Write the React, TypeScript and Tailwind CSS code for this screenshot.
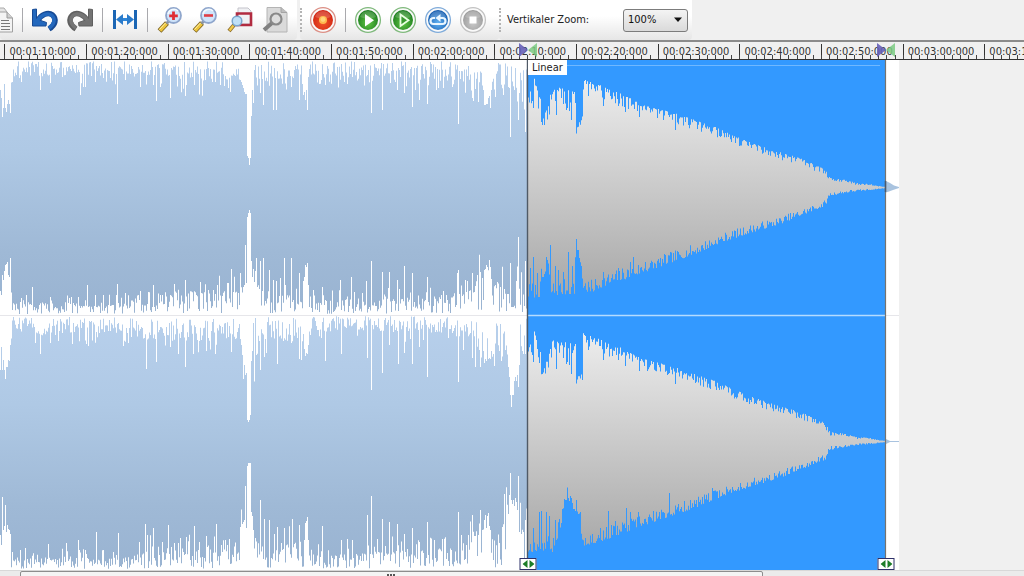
import type { ReactNode } from "react";

type Spike = [number, number];

const VIEW_WIDTH = 1024;
const CHANNEL_HEIGHT = 255;
const SECONDS_PER_VIEW = 125.4;
const FIRST_MARK_OFFSET = 0.55;
const SELECTION_START = 528;
const SELECTION_END = 886;
const CLIP_END = 899;

const percent = (x: number) => `${(x / VIEW_WIDTH) * 100}%`;

/* ---------- waveform data ---------- */

const topOne: Spike[] = [
  [0, 30], [1, 38], [2, 57], [3, 48], [4, 24], [5, 48], [6, 52], [7, 44], [8, 40], [9, 44], [10, 53], [12, 22], [19, 18], [25, 12],
  [40, 30], [50, 23], [62, 17], [80, 35], [85, 27], [95, 22], [103, 18], [117, 44], [125, 20], [140, 27], [156, 41], [160, 27],
  [170, 38], [185, 36], [194, 25], [205, 20], [212, 22], [215, 22], [220, 25], [228, 28], [230, 32], [235, 16], [240, 20],
  [241, 22], [242, 25], [243, 28], [244, 32], [245, 34], [246, 34], [247, 96], [248, 98], [249, 105], [250, 98], [251, 56],
  [252, 30], [253, 43], [260, 33], [263, 45], [273, 50], [276, 50], [291, 27], [299, 40], [302, 24], [303, 35], [304, 32],
  [305, 40], [306, 30], [307, 50], [321, 20], [325, 25], [347, 24], [371, 53], [382, 50], [397, 30], [404, 33], [412, 47],
  [419, 40], [427, 44], [436, 30], [443, 28], [458, 64], [472, 38], [478, 42], [483, 30], [484, 45], [485, 45], [486, 44],
  [487, 44], [488, 38], [489, 36], [490, 48], [491, 30], [495, 37], [503, 35], [508, 27], [510, 77], [514, 30], [518, 60], [525, 72],
];

const bottomOne: Spike[] = [
  [0, 24], [1, 20], [2, 40], [3, 35], [4, 44], [5, 50], [6, 51], [7, 53], [8, 40], [9, 38], [10, 57], [26, 20], [32, 28],
  [50, 18], [78, 18], [87, 30], [95, 20], [103, 20], [117, 31], [125, 22], [140, 24], [153, 30], [160, 20], [170, 20],
  [185, 35], [200, 33], [208, 25], [213, 25], [228, 32], [231, 46], [238, 22], [240, 42], [243, 28], [244, 30], [245, 70],
  [246, 32], [247, 98], [248, 102], [249, 105], [250, 102], [251, 54], [252, 38], [253, 46], [255, 44], [260, 54], [263, 57],
  [269, 45], [273, 35], [276, 34], [280, 37], [284, 57], [291, 57], [299, 42], [303, 34], [304, 38], [305, 50], [306, 48],
  [307, 52], [308, 30], [313, 25], [322, 28], [340, 35], [351, 38], [366, 34], [371, 54], [382, 43], [389, 43], [397, 35],
  [404, 49], [412, 42], [427, 38], [443, 24], [457, 42], [458, 45], [465, 35], [472, 42], [477, 40], [480, 43], [482, 37],
  [484, 45], [486, 50], [487, 48], [489, 55], [490, 48], [491, 36], [495, 30], [510, 52], [516, 34], [518, 78], [525, 54],
];

const topTwo: Spike[] = [
  [0, 55], [1, 32], [2, 55], [3, 45], [4, 55], [5, 64], [6, 52], [7, 52], [8, 45], [9, 46], [10, 30], [35, 28], [40, 39],
  [50, 28], [58, 26], [72, 29], [86, 29], [88, 31], [123, 31], [146, 54], [156, 47], [170, 32], [178, 39], [185, 52], [193, 39],
  [206, 36], [215, 39], [231, 37], [240, 24], [241, 30], [242, 40], [243, 64], [244, 50], [245, 60], [246, 58], [247, 105],
  [248, 107], [249, 105], [250, 100], [251, 46], [252, 36], [260, 55], [264, 42], [266, 38], [277, 49], [291, 28], [299, 44],
  [304, 34], [305, 41], [306, 38], [307, 39], [308, 30], [325, 46], [341, 39], [367, 43], [371, 75], [382, 58], [389, 30],
  [398, 49], [404, 38], [412, 49], [419, 32], [427, 62], [458, 67], [472, 43], [479, 35], [480, 52], [483, 36], [484, 48],
  [485, 44], [486, 46], [488, 44], [489, 43], [490, 44], [491, 36], [505, 35], [508, 52], [509, 62], [510, 80], [511, 92],
  [512, 80], [513, 80], [514, 66], [515, 62], [516, 66], [517, 60], [518, 72], [519, 50], [522, 36], [525, 39],
];

const bottomTwo: Spike[] = [
  [0, 35], [1, 25], [2, 73], [3, 40], [4, 44], [5, 65], [6, 38], [7, 45], [8, 41], [9, 40], [10, 36], [20, 20], [25, 22],
  [48, 26], [66, 27], [78, 30], [85, 20], [96, 38], [103, 20], [118, 37], [139, 28], [145, 46], [147, 35], [153, 42],
  [162, 28], [168, 45], [178, 27], [186, 33], [194, 44], [199, 28], [206, 34], [216, 46], [221, 25], [229, 31], [240, 43],
  [242, 46], [243, 48], [244, 50], [245, 84], [246, 42], [247, 104], [248, 107], [249, 107], [250, 107], [251, 58],
  [252, 54], [253, 40], [260, 70], [264, 51], [269, 50], [274, 36], [277, 43], [284, 42], [292, 51], [299, 45], [304, 30],
  [305, 47], [306, 49], [307, 53], [308, 30], [322, 44], [341, 30], [347, 31], [352, 30], [367, 55], [371, 74], [382, 51],
  [389, 48], [397, 46], [404, 36], [412, 42], [419, 28], [427, 48], [434, 30], [458, 58], [466, 25], [472, 55], [478, 35],
  [480, 60], [482, 40], [484, 50], [485, 55], [486, 42], [487, 54], [488, 57], [489, 44], [490, 40], [508, 56], [509, 75],
  [510, 97], [511, 70], [512, 66], [513, 70], [514, 64], [515, 72], [516, 68], [517, 60], [518, 94], [519, 38], [523, 38], [525, 50],
];

const fadeTop: Spike[] = [
  [528, 96], [530, 90], [532, 92], [534, 76], [536, 85], [538, 96], [540, 98], [541, 117], [543, 118], [545, 108], [548, 106],
  [550, 92], [553, 85], [557, 86], [564, 88], [569, 89], [575, 90], [576, 128], [578, 120], [580, 124], [582, 116], [583, 79],
  [590, 82], [600, 85], [610, 90], [625, 95], [640, 104], [660, 109], [680, 115], [700, 122], [715, 127], [735, 136],
  [750, 142], [775, 151], [790, 155], [805, 160], [815, 165], [825, 169], [828, 175], [830, 178], [840, 179], [850, 181],
  [856, 183], [870, 184], [878, 186], [886, 187],
];

const fadeBottomOne: Spike[] = [
  [528, 298], [540, 297], [541, 284], [548, 274], [550, 296], [574, 294], [575, 264], [580, 264], [583, 290], [590, 294],
  [600, 288], [640, 274], [700, 252], [720, 243], [750, 233], [780, 224], [800, 216], [825, 206], [829, 196], [850, 192],
  [870, 190], [886, 188],
];

const fadeBottomTwo: Spike[] = [
  [528, 299], [540, 296], [552, 298], [556, 288], [560, 274], [564, 254], [568, 245], [573, 255], [578, 262], [583, 292],
  [600, 288], [640, 273], [700, 252], [720, 243], [750, 233], [780, 224], [800, 216], [825, 206], [829, 196], [850, 192],
  [870, 190], [886, 188],
];

const fadeTopSpikes: Spike[] = [
  [533, 108], [556, 115], [563, 104], [566, 110], [567, 108], [569, 111], [571, 120], [588, 96], [603, 106], [618, 106],
  [625, 112], [639, 117], [675, 130], [719, 136], [735, 143], [751, 148],
];
const fadeBottomOneSpikes: Spike[] = [
  [530, 268], [533, 257], [537, 273], [546, 257], [547, 260], [550, 245], [555, 266], [558, 270], [563, 272], [568, 252], [572, 266], [576, 239],
  [577, 250], [579, 258], [603, 272], [618, 268], [630, 262], [633, 257], [645, 262], [735, 231],
];
const fadeBottomTwoSpikes: Spike[] = [
  [533, 274], [539, 258], [541, 257], [546, 258], [549, 262], [555, 266], [565, 246], [568, 244], [571, 244], [576, 246],
  [580, 258], [600, 274], [608, 257], [615, 267], [626, 254], [630, 258], [638, 258], [669, 239], [690, 246], [712, 234],
];

function noise(seed: number) {
  let state = seed;
  return () => {
    state = (state * 1664525 + 1013904223) >>> 0;
    return state / 4294967296;
  };
}

function interpolate(points: Spike[], x: number) {
  for (let i = 1; i < points.length; i++) {
    if (x <= points[i][0]) {
      const [x0, y0] = points[i - 1];
      const [x1, y1] = points[i];
      return y0 + ((y1 - y0) * (x - x0)) / (x1 - x0);
    }
  }
  return points[points.length - 1][1];
}

function loudEdge(spikes: Spike[], floor: Spike[], seed: number) {
  const random = noise(seed);
  const known = new Map(spikes);
  return Array.from({ length: SELECTION_START }, (_, x) => {
    const level = interpolate(floor, x);
    const value = level * (0.1 + random() * 1.3) + (random() > 0.82 ? level * 0.9 : 0);
    return known.get(x) ?? Math.max(0, value);
  });
}

function fadeEdge(points: Spike[], spikes: Spike[], direction: number, seed: number) {
  const random = noise(seed);
  const known = new Map(spikes);
  return Array.from({ length: SELECTION_END - SELECTION_START }, (_, i) => {
    const x = SELECTION_START + i;
    const base = interpolate(points, x);
    const roughness = x < 584 ? 16 : x < 828 ? 14 - ((x - 584) / 244) * 8 : 4 - ((x - 828) / 58) * 4;
    return known.get(x) ?? base + direction * roughness * Math.pow(random(), 1.7);
  });
}

function outline(startX: number, top: number[], bottom: number[]) {
  let path = `M${startX} ${top[0].toFixed(1)}`;
  top.forEach((y, i) => {
    path += `V${y.toFixed(1)}H${startX + i + 1}`;
  });
  for (let i = bottom.length - 1; i >= 0; i--) {
    path += `V${bottom[i].toFixed(1)}H${startX + i}`;
  }
  return path + "Z";
}

const topFloor: Spike[] = [[0, 30], [10, 30], [12, 11], [80, 12], [130, 10], [200, 16], [235, 14], [262, 14], [320, 12], [400, 13], [470, 15], [482, 30], [492, 26], [500, 20], [528, 22]];
const lowFloor: Spike[] = [[0, 25], [10, 30], [12, 8], [60, 9], [128, 9], [140, 17], [232, 18], [240, 22], [256, 26], [266, 14], [302, 16], [308, 18], [320, 11], [400, 12], [460, 16], [474, 22], [480, 40], [490, 38], [496, 24], [528, 22]];
const upperFloor: Spike[] = [[0, 30], [10, 30], [12, 7], [28, 8], [34, 14], [130, 13], [150, 20], [232, 18], [240, 22], [256, 30], [268, 16], [302, 22], [310, 14], [350, 10], [458, 14], [474, 20], [480, 38], [490, 38], [497, 24], [507, 36], [528, 26]];
const baseFloor: Spike[] = [[0, 30], [10, 30], [12, 9], [130, 11], [150, 17], [232, 15], [238, 28], [256, 28], [270, 12], [302, 24], [312, 11], [400, 15], [465, 16], [476, 38], [490, 32], [497, 16], [508, 50], [520, 30], [528, 30]];

const channels = [
  {
    loud: outline(0, loudEdge(topOne, topFloor, 11), loudEdge(bottomOne, lowFloor, 29).map((d) => CHANNEL_HEIGHT - d)),
    fade: outline(
      SELECTION_START,
      fadeEdge(fadeTop, fadeTopSpikes, 1, 5).map((y) => y - 60),
      fadeEdge(fadeBottomOne, fadeBottomOneSpikes, -1, 7).map((y) => y - 60),
    ),
  },
  {
    loud: outline(0, loudEdge(topTwo, upperFloor, 47), loudEdge(bottomTwo, baseFloor, 83).map((d) => CHANNEL_HEIGHT - d)),
    fade: outline(
      SELECTION_START,
      fadeEdge(fadeTop, fadeTopSpikes, 1, 53).map((y) => y - 61),
      fadeEdge(fadeBottomTwo, fadeBottomTwoSpikes, -1, 67).map((y) => y - 61),
    ),
  },
];

function Waveform() {
  return (
    <svg
      className="block h-full w-full"
      viewBox="0 0 1024 510"
      preserveAspectRatio="none"
      role="img"
      aria-label="Wellenform"
    >
      <defs>
        <linearGradient id="loud" x1="0" y1="0" x2="0" y2="255" gradientUnits="userSpaceOnUse">
          <stop offset="0" stopColor="#b8d0ec" />
          <stop offset="0.35" stopColor="#afc9e5" />
          <stop offset="0.75" stopColor="#9fb9d6" />
          <stop offset="1" stopColor="#99b3d1" />
        </linearGradient>
        <linearGradient id="fade" x1="0" y1="20" x2="0" y2="235" gradientUnits="userSpaceOnUse">
          <stop offset="0" stopColor="#ececec" />
          <stop offset="0.5" stopColor="#cacaca" />
          <stop offset="1" stopColor="#a8a8a8" />
        </linearGradient>
      </defs>
      <rect width={CLIP_END} height="510" fill="#ffffff" />
      <rect x={SELECTION_START} width={SELECTION_END - SELECTION_START} height="510" fill="#3399ff" />
      {channels.map((channel, index) => (
        <g key={index} transform={`translate(0 ${index * CHANNEL_HEIGHT})`}>
          <path d={channel.loud} fill="url(#loud)" />
          <path d={channel.fade} fill="url(#fade)" />
        </g>
      ))}
      <path d="M886 121l4 2l4 2.500l5 1.500v1l-6 2l-4 1.500l-3 1z" fill="#a9c3df" />
      <path d="M886 379l4 2h9v1h-9l-4 2z" fill="#a9c3df" />
      <path d="M0 255.500H528M886 255.500h13" stroke="#e6e6ea" />
      <path d="M528 255.500H886" stroke="#b5dcff" strokeWidth="1.500" />
      <path d="M567 5.500H880" stroke="#70b8ff" />
      <path d="M527.500 0V510" stroke="#505a66" strokeWidth="1.400" />
      <path d="M885.500 0V510" stroke="#75736f" strokeWidth="1.200" />
      <path d="M885.500 121v11" stroke="#4d5a6b" strokeWidth="1.500" />
    </svg>
  );
}

/* ---------- icons ---------- */

const Icon = ({ children }: { children: ReactNode }) => (
  <svg className="block h-7 w-7" viewBox="0 0 28 28" fill="none" aria-hidden="true">
    {children}
  </svg>
);

const CopyIcon = () => (
  <Icon>
    <path d="M9 2h9l3 4v19H9z" fill="#e4e4e4" stroke="#aaa" />
    <path d="M13 6h8l5.500 6v14H13z" fill="#f3f3f3" stroke="#a0a0a0" />
    <path d="M21 6v6h5.500" fill="#cfcfcf" stroke="#999" />
    <path d="M15 14.500h8M15 17.500h9M15 20.500h9M15 23.500h9" stroke="#777" />
  </Icon>
);

const UndoIcon = () => (
  <Icon>
    <path d="M6.500 15C10 8.500 17 5.500 21.500 9C26 13 24.500 19 18 23" stroke="#174a94" strokeWidth="5.400" />
    <path d="M1.500 3.500l4-.5v10l10 3.500l-.5 3.500H1.500z" fill="#2368bd" stroke="#174a94" />
    <path d="M6 15C10 9 16.500 6 21 9.500C24.500 13 23.500 18 18 22" stroke="#2468bd" strokeWidth="3.600" />
  </Icon>
);

const RedoIcon = () => (
  <Icon>
    <path d="M21.500 15C18 8.500 11 5.500 6.500 9C2 13 3.500 19 10 23" stroke="#606060" strokeWidth="5.400" />
    <path d="M26.500 3.500l-4-.5v10l-10 3.500l.5 3.500h13.500z" fill="#737373" stroke="#606060" />
    <path d="M22 15C18 9 11.500 6 7 9.500C3.500 13 4.500 18 10 22" stroke="#757575" strokeWidth="3.600" />
  </Icon>
);

const FitIcon = () => (
  <Icon>
    <path d="M3.500 4v19M24.500 4v19" stroke="#1c66b4" strokeWidth="3" />
    <path d="M7 13.500h14" stroke="#2e86d8" strokeWidth="3" />
    <path d="M5 13.500l7-5.500v11zM23 13.500L16 8v11z" fill="#2a7bcb" />
  </Icon>
);

const Lens = ({ children }: { children?: ReactNode }) => (
  <>
    <path d="M11 17l-7.500 8" stroke="#7d6424" strokeWidth="5.200" />
    <path d="M10.500 17.500L4 24.500" stroke="#edc53c" strokeWidth="3.600" />
    <path d="M9.500 17L3.500 23.500" stroke="#fff0a6" strokeWidth="1" />
    <path d="M13 15l-2.500 2.500" stroke="#8b93a0" strokeWidth="3" />
    <circle cx="17.500" cy="9.500" r="7.500" fill="#cfe4fa" stroke="#8fa6cc" strokeWidth="1.800" />
    <path d="M12 8a6 6 0 0 1 10-3" stroke="#f4faff" strokeWidth="1.600" />
    {children}
  </>
);

const ZoomInIcon = () => (
  <Icon>
    <Lens>
      <path d="M17.500 5.500v8.500M13.200 9.800h8.600" stroke="#df2d35" strokeWidth="2.800" />
    </Lens>
  </Icon>
);

const ZoomOutIcon = () => (
  <Icon>
    <Lens>
      <path d="M13 9.500h9" stroke="#df3d45" strokeWidth="2.600" />
    </Lens>
  </Icon>
);

const ZoomSelectionIcon = () => (
  <Icon>
    <path d="M12 2h10l3 3v13H12z" fill="#f0f1f4" stroke="#c3c3ca" />
    <path d="M11 7.500h14v11.500H11z" stroke="#b12b40" strokeWidth="2.600" />
    <path d="M8 19l-5 6" stroke="#8b6c2a" strokeWidth="4" />
    <path d="M7.500 19.500l-4 5" stroke="#f0c94b" strokeWidth="2.400" />
    <circle cx="11" cy="15" r="4.800" fill="#bfe0f7" stroke="#7ba5cd" strokeWidth="1.500" />
  </Icon>
);

const ZoomPageIcon = () => (
  <Icon>
    <path d="M6 1.500h14l6 5V26H6z" fill="#dadada" stroke="#b4b4b4" />
    <path d="M20 1.500v5h6" fill="#bdbdbd" stroke="#a4a4a4" />
    <path d="M11 17l-8 7" stroke="#808080" strokeWidth="4" />
    <circle cx="15" cy="13" r="5.500" fill="#dedede" stroke="#898989" strokeWidth="2.200" />
  </Icon>
);

const Orb = ({ id, light, dark, ring, children }: { id: string; light: string; dark: string; ring: string; children: ReactNode }) => (
  <Icon>
    <defs>
      <radialGradient id={id} cx="0.5" cy="0.65" r="0.6">
        <stop offset="0" stopColor={light} />
        <stop offset="1" stopColor={dark} />
      </radialGradient>
    </defs>
    <circle cx="14" cy="14" r="12.400" fill="#fafafa" stroke={ring} strokeWidth="1.300" />
    <circle cx="14" cy="14" r="10" fill={`url(#${id})`} />
    <path d="M6 11a8.300 8.300 0 0 1 16 0q-8 3-16 0z" fill="#fff" opacity="0.18" />
    {children}
  </Icon>
);

const RecordIcon = () => (
  <Orb id="record" light="#f2552b" dark="#cf2312" ring="#dc8f85">
    <circle cx="14" cy="14" r="4" fill="#ffb850" />
    <circle cx="14" cy="13.500" r="2.400" fill="#ffd47c" />
  </Orb>
);

const PlayIcon = () => (
  <Orb id="play" light="#62c846" dark="#1c7c1e" ring="#7fb97c">
    <path d="M11 8l9 6.200L11 20.500z" fill="#fff" />
  </Orb>
);

const PlaySelectionIcon = () => (
  <Orb id="playSelection" light="#62c846" dark="#1c7c1e" ring="#7fb97c">
    <path d="M11.500 8.500l8 5.700l-8 5.700z" fill="#3a9a30" stroke="#e9ffe2" strokeWidth="1.800" />
  </Orb>
);

const LoopIcon = () => (
  <Orb id="loop" light="#62b2f2" dark="#145caf" ring="#7fabda">
    <path d="M11 12h-1.500a3 3 0 0 0 0 6h9a3 3 0 0 0 0-6H15" stroke="#e9f6ff" strokeWidth="2.200" />
    <path d="M16.500 8v8L11.500 12z" fill="#e9f6ff" />
  </Orb>
);

const StopIcon = () => (
  <Orb id="stop" light="#c9c9c9" dark="#9b9b9b" ring="#c2c2c2">
    <path d="M10.500 10.500h7v7h-7z" fill="#fff" />
  </Orb>
);

/* ---------- toolbar ---------- */

const ToolButton = ({ label, children }: { label: string; children: ReactNode }) => (
  <button type="button" aria-label={label} className="h-7 w-7 shrink-0">
    {children}
  </button>
);

const Separator = () => <span className="mx-px h-6 w-px shrink-0 bg-[#a9a9ad]" />;

const Grip = () => <span className="h-6 shrink-0 border-l-2 border-dotted border-[#b4b4b4]" />;

const group = "flex h-10 shrink-0 items-center rounded-b bg-linear-to-b from-white from-40% to-[#e6e6e6]";

function Toolbar() {
  return (
    <header className="flex h-10 overflow-hidden bg-[#f0f0f0]">
      <div className={`${group} gap-[7px] pr-2`}>
        <div className="-ml-3.5 flex">
          <ToolButton label="Kopieren"><CopyIcon /></ToolButton>
        </div>
        <Separator />
        <ToolButton label="Rückgängig"><UndoIcon /></ToolButton>
        <ToolButton label="Wiederholen"><RedoIcon /></ToolButton>
        <Separator />
        <ToolButton label="Einpassen"><FitIcon /></ToolButton>
        <Separator />
        <ToolButton label="Vergrößern"><ZoomInIcon /></ToolButton>
        <ToolButton label="Verkleinern"><ZoomOutIcon /></ToolButton>
        <ToolButton label="Auswahl zoomen"><ZoomSelectionIcon /></ToolButton>
        <ToolButton label="Alles zeigen"><ZoomPageIcon /></ToolButton>
      </div>
      <div className={`${group} ml-[3px] gap-[7px] pr-3`}>
        <Grip />
        <ToolButton label="Aufnahme"><RecordIcon /></ToolButton>
        <Separator />
        <ToolButton label="Wiedergabe"><PlayIcon /></ToolButton>
        <ToolButton label="Auswahl wiedergeben"><PlaySelectionIcon /></ToolButton>
        <ToolButton label="Schleife"><LoopIcon /></ToolButton>
        <ToolButton label="Stopp"><StopIcon /></ToolButton>
      </div>
      <div className={`${group} pr-1`}>
        <Grip />
        <label htmlFor="zoom" className="w-[122px] shrink-0 pl-1.5 text-[11px] text-[#222]">
          Vertikaler Zoom:
        </label>
        <div className="relative">
          <select
            id="zoom"
            defaultValue="100"
            className="block h-[23px] w-[65px] appearance-none rounded-[3px] border border-[#7c7c7c] bg-linear-to-b from-[#f4f4f4] to-[#dadada] pl-1 text-[11px] text-[#111]"
          >
            <option value="50">50%</option>
            <option value="100">100%</option>
            <option value="200">200%</option>
          </select>
          <svg className="pointer-events-none absolute top-2 right-1.5 h-1.5 w-2" viewBox="0 0 8 6" aria-hidden="true">
            <path d="M0 .500h8L4 5z" fill="#111" />
          </svg>
        </div>
      </div>
    </header>
  );
}

/* ---------- ruler ---------- */

const marks = [
  "00:01:10:000", "00:01:20:000", "00:01:30:000", "00:01:40:000", "00:01:50:000", "00:02:00:000", "00:02:10:000",
  "00:02:20:000", "00:02:30:000", "00:02:40:000", "00:02:50:000", "00:03:00:000", "00:03:10:000",
];

const Marker = ({ x }: { x: number }) => (
  <svg
    className="absolute top-0 h-4 w-[18px] -translate-x-1/2"
    style={{ left: percent(x) }}
    viewBox="0 0 18 16"
    aria-hidden="true"
  >
    <path d="M0 1l9 7l-9 7z" fill="#6660b8" opacity="0.9" />
    <path d="M18 1L9 8l9 7z" fill="#7ccb82" opacity="0.85" />
  </svg>
);

function Ruler() {
  return (
    <div className="relative h-5 shrink-0 overflow-hidden border-t-2 border-b border-t-[#8b8b8b] border-b-[#333] bg-[#f0f0f0]">
      <div className="flex h-full">
        <span className="shrink-0" style={{ width: `${(FIRST_MARK_OFFSET / SECONDS_PER_VIEW) * 100}%` }} />
        {marks.map((mark) => (
          <div
            key={mark}
            className="grid h-full shrink-0"
            style={{ width: `${(10 / SECONDS_PER_VIEW) * 100}%` }}
          >
            <span className="col-start-1 row-start-1 mt-0.5 border-l border-[#333] pl-1 text-[11px] leading-[15px] text-[#333]">
              {mark}
            </span>
            <div className="col-start-1 row-start-1 grid h-1 grid-cols-10 self-end">
              {Array.from({ length: 10 }, (_, i) => (
                <span key={i} className="border-l border-[#444]" />
              ))}
            </div>
          </div>
        ))}
      </div>
      <Marker x={SELECTION_START} />
      <Marker x={SELECTION_END} />
    </div>
  );
}

/* ---------- editor ---------- */

const Handle = ({ x, label }: { x: number; label: string }) => (
  <button
    type="button"
    aria-label={label}
    className="absolute bottom-0 flex h-3 w-[17px] -translate-x-1/2 items-center justify-center border border-[#2d3068] bg-white"
    style={{ left: percent(x) }}
  >
    <svg className="h-2 w-3" viewBox="0 0 12 8" aria-hidden="true">
      <path d="M5 0v8L0 4zM7 0v8l5-4z" fill="#1d7d28" />
    </svg>
  </button>
);

export default function App() {
  return (
    <div className="flex h-screen flex-col overflow-hidden bg-[#f0f0f0] font-['DejaVu_Sans_Condensed','DejaVu_Sans',sans-serif]">
      <Toolbar />
      <Ruler />
      <main className="relative min-h-0 flex-1">
        <Waveform />
        <span
          className="absolute top-0 bg-white px-1 text-[11px] leading-[15px] text-[#222]"
          style={{ left: percent(SELECTION_START) }}
        >
          Linear
        </span>
        <Handle x={SELECTION_START} label="Auswahlanfang" />
        <Handle x={SELECTION_END} label="Auswahlende" />
      </main>
      <footer className="h-1.5 shrink-0 overflow-hidden border-t border-[#d8d8d8] bg-[#ebebeb] pl-5">
        <div className="flex h-4 w-[74%] justify-center rounded-t-xs border border-[#8d8d8d] bg-[#f4f4f4] pt-0.5">
          <span className="h-1 w-2 border-t-2 border-dotted border-[#555]" />
        </div>
      </footer>
    </div>
  );
}
